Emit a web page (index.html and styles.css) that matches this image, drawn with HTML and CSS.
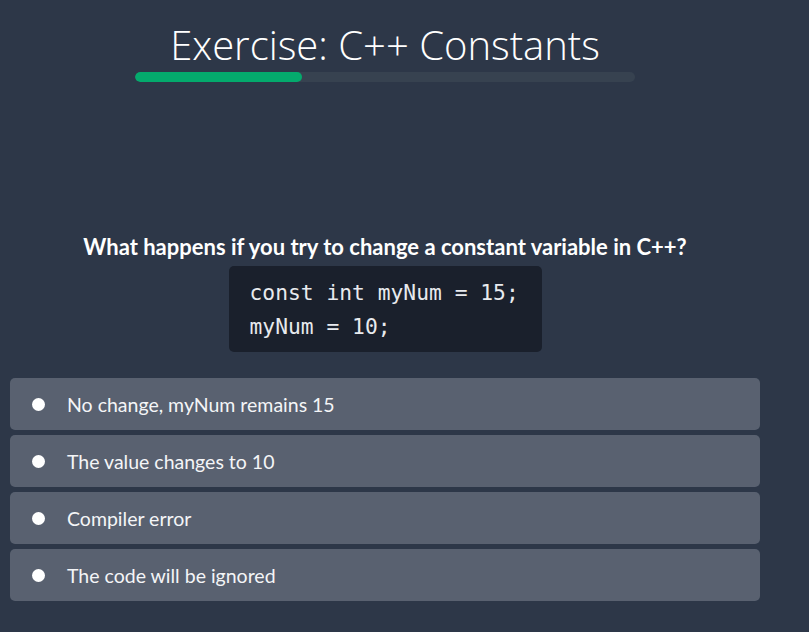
FILE: index.html
```html
<!DOCTYPE html>
<html>
<head>
<meta charset="utf-8">
<link rel="stylesheet" href="styles.css">
</head>
<body>
<main class="quiz">
  <h1 class="title">Exercise: C++ Constants</h1>
  <div class="progress"><div class="progress-fill" style="width:33.3%"></div></div>
  <p class="question">What happens if you try to change a constant variable in C++?</p>
  <pre class="code">const int myNum = 15;
myNum = 10;</pre>
  <ul class="options">
    <li class="option"><span class="radio"></span><span class="label">No change, myNum remains 15</span></li>
    <li class="option"><span class="radio"></span><span class="label">The value changes to 10</span></li>
    <li class="option"><span class="radio"></span><span class="label">Compiler error</span></li>
    <li class="option"><span class="radio"></span><span class="label">The code will be ignored</span></li>
  </ul>
</main>
</body>
</html>
```
FILE: styles.css
```css
html, body {
  margin: 0;
  padding: 0;
  background: #2d3748;
  height: 100%;
}
body {
  font-family: "Lato", "Noto Sans", sans-serif;
  color: #ffffff;
}
.quiz {
  width: 750px;
  padding: 0 10px;
  display: flex;
  flex-direction: column;
  align-items: center;
}
.title {
  margin: 19px 0 0;
  font-family: "Open Sans", sans-serif;
  font-weight: 300;
  font-size: 40px;
  line-height: 52px;
  color: #ffffff;
}
.progress {
  width: 500px;
  height: 10px;
  margin-top: 1px;
  background: #374250;
  border-radius: 5px;
  overflow: hidden;
}
.progress-fill {
  height: 100%;
  background: #04aa6d;
  border-radius: 5px;
}
.question {
  margin: 151px 0 0;
  font-family: "Lato", sans-serif;
  font-weight: 700;
  font-size: 22px;
  line-height: 28px;
}
.code {
  margin: 5px 0 0;
  width: 271px;
  padding: 10px 21px 8px 21px;
  background: #1a202c;
  border-radius: 5px;
  font-family: "DejaVu Sans Mono", monospace;
  font-size: 21.3px;
  line-height: 34px;
  color: #e8eaee;
}
.options {
  list-style: none;
  margin: 26px 0 0;
  padding: 0;
  width: 750px;
  display: flex;
  flex-direction: column;
  gap: 5px;
}
.option {
  height: 52px;
  background: #596170;
  border-radius: 5px;
  display: flex;
  align-items: center;
  padding-left: 22px;
  font-size: 19.5px;
}
.radio {
  width: 13px;
  height: 13px;
  border-radius: 50%;
  background: #ffffff;
  margin-right: 22px;
  flex: none;
}
.label {
  color: #f4f5f7;
}
```
